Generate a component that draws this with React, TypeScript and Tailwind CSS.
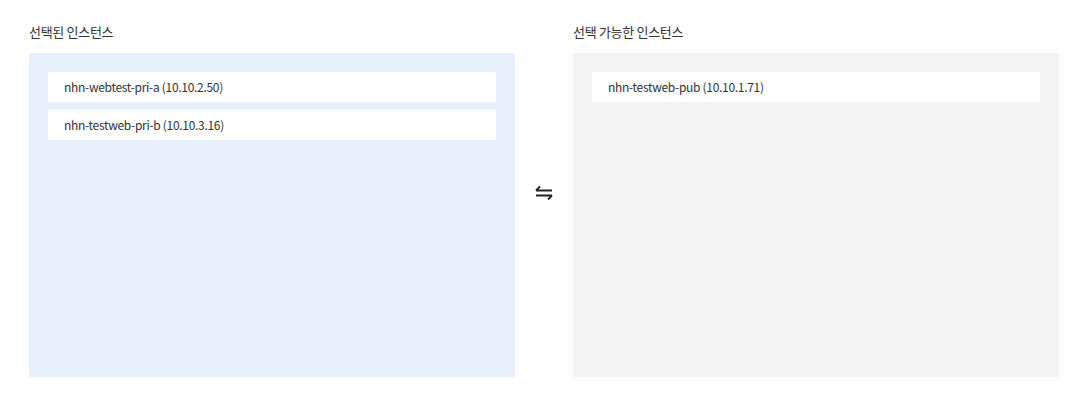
const selected = ["nhn-webtest-pri-a (10.10.2.50)", "nhn-testweb-pri-b (10.10.3.16)"];
const available = ["nhn-testweb-pub (10.10.1.71)"];

function SwapIcon() {
  return (
    <svg width="18" height="16" viewBox="0 0 18 16" fill="none" aria-hidden="true">
      <path d="M1 6.5h16M1 6.5L5 2.5" stroke="#222" strokeWidth="1.8" />
      <path d="M1 11.5h16M17 11.5L13 15.5" stroke="#222" strokeWidth="1.8" />
    </svg>
  );
}

function InstancePanel({ title, items, tone }: { title: string; items: string[]; tone: "blue" | "gray" }) {
  return (
    <div className="flex w-[486px] shrink-0 flex-col">
      <h3 className="mb-[13px] text-[13px] font-normal leading-[16px] tracking-[-0.3px] text-[#333]">{title}</h3>
      <ul
        className={`flex h-[324px] flex-col gap-[8px] px-[19px] pt-[19px] ${
          tone === "blue" ? "bg-[#e8f0fd]" : "bg-[#f3f3f3]"
        }`}
      >
        {items.map((item) => (
          <li
            key={item}
            className="flex h-[30px] items-center bg-white px-[16px] text-[12px] tracking-[-0.3px] text-[#333]"
          >
            {item}
          </li>
        ))}
      </ul>
    </div>
  );
}

export default function App() {
  return (
    <div
      className="flex h-[393px] w-[1088px] bg-white pl-[29px] pt-[24px]"
      style={{ fontFamily: '"Noto Sans CJK KR", "Noto Sans", sans-serif' }}
    >
      <InstancePanel title="선택된 인스턴스" items={selected} tone="blue" />
      <div className="flex w-[58px] shrink-0 justify-center pt-[160px]">
        <SwapIcon />
      </div>
      <InstancePanel title="선택 가능한 인스턴스" items={available} tone="gray" />
    </div>
  );
}
